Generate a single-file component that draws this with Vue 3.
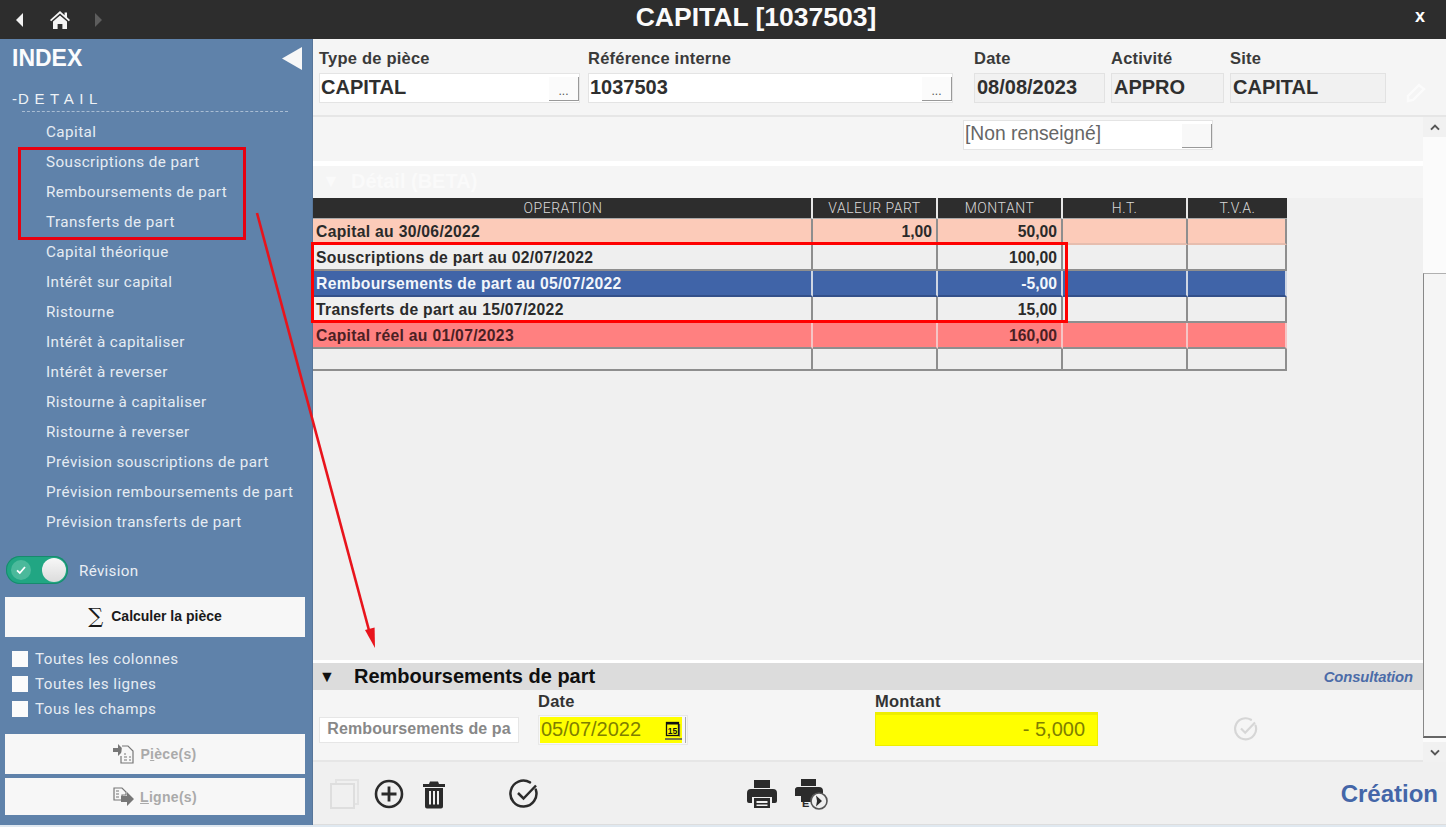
<script setup>
const items = ['Capital','Souscriptions de part','Remboursements de part','Transferts de part','Capital théorique','Intérêt sur capital','Ristourne','Intérêt à capitaliser','Intérêt à reverser','Ristourne à capitaliser','Ristourne à reverser','Prévision souscriptions de part','Prévision remboursements de part','Prévision transferts de part']
const checks = ['Toutes les colonnes','Toutes les lignes','Tous les champs']
const rows = [
  { cls:'peach', op:'Capital au 30/06/2022', val:'1,00', mt:'50,00' },
  { cls:'plain', op:'Souscriptions de part au 02/07/2022', val:'', mt:'100,00' },
  { cls:'blue', op:'Remboursements de part au 05/07/2022', val:'', mt:'-5,00' },
  { cls:'plain', op:'Transferts de part au 15/07/2022', val:'', mt:'15,00' },
  { cls:'red', op:'Capital réel au 01/07/2023', val:'', mt:'160,00' },
  { cls:'plain empty', op:'', val:'', mt:'' },
]
</script>

<template>
  <div class="app">
    <header class="topbar">
      <div class="nav">
        <svg class="nav-arrow" width="10" height="14" viewBox="0 0 10 14"><path d="M8 0v14L1 7z" fill="#f2f2f2"/></svg>
        <svg class="nav-home" width="22" height="20" viewBox="0 0 22 20"><path d="M11 1 1 10l1.2 1.3L11 3.6l8.8 7.7L21 10l-3-2.7V2.5h-2.4v2.7z" fill="#f5f5f5"/><path d="M4 11.5 11 5.4l7 6.1V19h-4.6v-5H8.6v5H4z" fill="#f5f5f5"/></svg>
        <svg class="nav-arrow dim" width="10" height="14" viewBox="0 0 10 14"><path d="M2 0v14l7-7z" fill="#5d5d5d"/></svg>
      </div>
      <h1 class="title">CAPITAL [1037503]</h1>
      <span class="close">x</span>
    </header>

    <div class="body">
      <aside class="sidebar">
        <div class="index-head">
          <span class="index-title">INDEX</span>
          <svg width="20" height="23" viewBox="0 0 20 23"><path d="M20 0v23L0 11.5z" fill="#f7f7f7"/></svg>
        </div>
        <div class="group">-<span class="group-name">DETAIL</span></div>
        <ul class="menu">
          <li v-for="it in items" :key="it">{{ it }}</li>
        </ul>
        <div class="toggle-row">
          <div class="toggle">
            <span class="toggle-check">
              <svg width="14" height="14" viewBox="0 0 14 14"><path d="M3 7.4 5.8 10 11 4" fill="none" stroke="#fff" stroke-width="1.8"/></svg>
            </span>
            <span class="toggle-knob"></span>
          </div>
          <span class="toggle-label">Révision</span>
        </div>
        <button class="side-btn calc">
          <span class="sigma">∑</span>
          <span>Calculer la pièce</span>
        </button>
        <div class="checks">
          <label v-for="c in checks" :key="c" class="check"><span class="box"></span>{{ c }}</label>
        </div>
        <button class="side-btn off first">
          <svg width="22" height="22" viewBox="0 0 22 22"><path d="M0 5h5V1l6 6-6 6V9H0z" fill="#777"/><path d="M9 3h6l5 5v12H8v-7" fill="#f7f7f7" stroke="#777" stroke-width="1.2"/><path d="M11 14h3M16 14h2M11 17h3M16 17h2M11 11h2" stroke="#777" stroke-width="1.2"/></svg>
          <span>P<u>i</u>èce(s)</span>
        </button>
        <button class="side-btn off second">
          <svg width="22" height="20" viewBox="0 0 22 20"><path d="M1 1h8l4 4v3H9v5H1z" fill="#f7f7f7" stroke="#777" stroke-width="1.2"/><path d="M3 4h3M3 7h3M3 10h3" stroke="#777" stroke-width="1.2"/><path d="M8 9h6V5l7 7-7 7v-4H8z" fill="#777"/></svg>
          <span><u>L</u>igne(s)</span>
        </button>
      </aside>

      <main class="main">
        <section class="head">
          <div class="field f-type">
            <label>Type de pièce</label>
            <div class="input"><span class="val">CAPITAL</span><span class="dots">...</span></div>
          </div>
          <div class="field f-ref">
            <label>Référence interne</label>
            <div class="input"><span class="val">1037503</span><span class="dots">...</span></div>
          </div>
          <div class="field f-date">
            <label>Date</label>
            <div class="input ro"><span class="val">08/08/2023</span></div>
          </div>
          <div class="field f-act">
            <label>Activité</label>
            <div class="input ro"><span class="val">APPRO</span></div>
          </div>
          <div class="field f-site">
            <label>Site</label>
            <div class="input ro"><span class="val">CAPITAL</span></div>
          </div>
          <svg class="pencil" width="24" height="24" viewBox="0 0 24 24"><path d="M4 15 15 4l5 4L9 19l-5 1z" fill="none" stroke="#fbfbfb" stroke-width="2.4"/></svg>
        </section>

        <div class="scroller">
          <div class="content">
            <div class="upper">
              <div class="combo"><span class="combo-val">[Non renseigné]</span><span class="combo-btn"></span></div>
              <div class="detail-head"><span class="tri">▼</span><span>Détail (BETA)</span></div>
              <div class="table-wrap">
                <table class="grid">
                  <colgroup><col class="c1"><col class="c2"><col class="c3"><col class="c4"><col class="c5"></colgroup>
                  <thead>
                    <tr><th>OPERATION</th><th>VALEUR PART</th><th>MONTANT</th><th>H.T.</th><th>T.V.A.</th></tr>
                  </thead>
                  <tbody>
                    <tr v-for="(r,i) in rows" :key="i" :class="r.cls">
                      <td class="op">{{ r.op }}</td><td class="num">{{ r.val }}</td><td class="num">{{ r.mt }}</td><td></td><td></td>
                    </tr>
                  </tbody>
                </table>
              </div>
            </div>
            <div class="sub-head">
              <span class="tri-dark">▼</span>
              <span class="sub-title">Remboursements de part</span>
              <span class="consult">Consultation</span>
            </div>
            <div class="sub-form">
              <div class="readonly-box">Remboursements de pa</div>
              <div class="sub-field sf-date">
                <label>Date</label>
                <div class="date-box">
                  <div class="date-fill">
                    <span>05/07/2022</span>
                    <svg class="cal" width="17" height="19" viewBox="0 0 17 19"><rect x="1.5" y="1.5" width="12" height="13" fill="none" stroke="#111" stroke-width="1.3"/><path d="M1 2.500h13" stroke="#111" stroke-width="2"/><path d="M14.500 3v12.500" stroke="#555" stroke-width="1.2"/><path d="M0 18h17" stroke="#555" stroke-width="1.6"/><text x="7.500" y="12.500" text-anchor="middle" class="cal-num">15</text></svg>
                  </div>
                </div>
              </div>
              <div class="sub-field sf-mt">
                <label>Montant</label>
                <div class="mt-box">- 5,000</div>
              </div>
              <svg class="faint-check" width="26" height="26" viewBox="0 0 26 26"><path d="M22.6 9.6A10.5 10.5 0 1 1 18 3.8" fill="none" stroke="#d6d6d6" stroke-width="2.2" stroke-linecap="round"/><path d="M8 12.5l4.2 4.2L22 6.6" fill="none" stroke="#d6d6d6" stroke-width="2.2"/></svg>
            </div>
          </div>
          <div class="scrollbar">
            <div class="sb-btn"><svg width="10" height="7" viewBox="0 0 10 7"><path d="M1 5.6 5 1.6l4 4" fill="none" stroke="#555" stroke-width="2"/></svg></div>
            <div class="sb-track"><div class="sb-thumb"></div></div>
            <div class="sb-btn"><svg width="10" height="7" viewBox="0 0 10 7"><path d="M1 1.4l4 4 4-4" fill="none" stroke="#555" stroke-width="2"/></svg></div>
          </div>
        </div>

        <footer class="toolbar">
          <svg class="t-copy" width="32" height="32" viewBox="0 0 32 32"><path d="M7 5V2h22v24h-4" fill="none" stroke="#e3e3e3" stroke-width="2"/><rect x="2" y="6" width="23" height="24" fill="none" stroke="#dedede" stroke-width="2"/></svg>
          <svg class="t-add" width="30" height="30" viewBox="0 0 30 30"><circle cx="15" cy="15" r="13" fill="none" stroke="#2b2b2b" stroke-width="2.6"/><path d="M15 7.5v15M7.500 15h15" stroke="#2b2b2b" stroke-width="2.8"/></svg>
          <svg class="t-del" width="24" height="30" viewBox="0 0 24 30"><path d="M8 2.500h8l1 2.500h6v3H1V5h6z" fill="#2b2b2b"/><path fill-rule="evenodd" d="M3 9h18v18.500a2 2 0 0 1-2 2H5a2 2 0 0 1-2-2zM7 12v13.500h2V12zM11 12v13.500h2V12zM15 12v13.500h2V12z" fill="#2b2b2b"/></svg>
          <svg class="t-ok" width="32" height="32" viewBox="0 0 32 32"><path d="M27.800 11.600A13 13 0 1 1 22 4.400" fill="none" stroke="#2b2b2b" stroke-width="2.500" stroke-linecap="round"/><path d="M10 15l5.500 5.500L28 7.500" fill="none" stroke="#2b2b2b" stroke-width="2.500"/></svg>
          <svg class="t-print" width="32" height="30" viewBox="0 0 32 30"><path d="M8 1h16v8H8z" fill="#2b2b2b"/><path d="M5 10h22a4 4 0 0 1 4 4v8a2 2 0 0 1-2 2h-3v-6H6v6H3a2 2 0 0 1-2-2v-8a4 4 0 0 1 4-4z" fill="#2b2b2b"/><path fill-rule="evenodd" d="M8 19h16v10H8zM10.500 22v2h11v-2zM10.500 25.500v1.500h11v-1.500z" fill="#2b2b2b"/></svg>
          <svg class="t-print2" width="34" height="32" viewBox="0 0 34 32"><path d="M6 1h15v7H6z" fill="#2b2b2b"/><path d="M3 9h21a4 4 0 0 1 4 4v5a10 10 0 0 0-11 6H6v-6H0v-5a3 3 0 0 1 3-4z" fill="#2b2b2b"/><text x="7" y="29" class="e-mark">E</text><circle cx="24" cy="23" r="8" fill="#efefef" stroke="#555" stroke-width="1.6"/><path d="M21 17.500l6 5.500-6 5.500 1-5.500z" fill="#2b2b2b"/></svg>
          <span class="creation">Création</span>
        </footer>
      </main>
    </div>

    <div class="mark mark-side"></div>
    <div class="mark mark-table"></div>
    <svg class="arrow" width="140" height="450" viewBox="0 0 140 450">
      <path d="M7 3 120 424" stroke="#e8141c" stroke-width="2.6" fill="none"/>
      <path d="M125 438 115 420 124.600 417.400z" fill="#e8141c"/>
    </svg>
  </div>
</template>

<style>
html, body { margin: 0; padding: 0; background: #e4ebf2; }
</style>

<style scoped>
.app { position: relative; width: 1446px; height: 827px; overflow: hidden; font-family: "Liberation Sans", Arial, sans-serif; background: #dfe8f0; }
.topbar { height: 39px; background: #2d2d2d; position: relative; display: flex; align-items: center; justify-content: center; color: #fff; }
.nav { position: absolute; left: 15px; top: 10px; display: flex; align-items: center; }
.nav-home { margin: 0 22px 0 24px; }
.title { margin: 0 0 5px 66px; font-size: 26.5px; font-weight: 700; color: #fbfbfb; }
.close { position: absolute; right: 21px; top: 6px; font-size: 18px; font-weight: 700; }

.body { display: flex; height: 786px; }

.sidebar { width: 313px; flex: none; box-sizing: border-box; background: #5f82aa; padding: 0 8px 0 5px; color: #e9eef4; border-right: 1px solid #57769a; }
.index-head { display: flex; justify-content: space-between; align-items: center; padding: 7px 2px 0 7px; height: 24px; }
.index-title { font-size: 23px; font-weight: 700; color: #fbfcfd; }
.group { margin: 19px 0 0 7px; font-size: 15px; line-height: 20px; color: #eef2f6; padding-bottom: 3px; position: relative; }
.group-name { letter-spacing: 5.6px; margin-left: 1px; }
.group::after { content: ""; position: absolute; left: 10px; width: 266px; bottom: 0; border-bottom: 1px dashed #a9bdd3; }
.menu { list-style: none; margin: 5px 0 0; padding: 0 0 0 41px; }
.menu li { height: 30px; line-height: 30px; font-size: 15.200px; letter-spacing: .45px; font-family: Roboto, "Liberation Sans", sans-serif; white-space: nowrap; width: 250px; color: #e6ecf3; }
.toggle-row { display: flex; align-items: center; margin-top: 19px; height: 28px; }
.toggle { width: 62px; height: 28px; margin-left: 1px; border-radius: 14px; background: #21a683; box-shadow: inset 0 0 0 1px #178a6d; display: flex; align-items: center; justify-content: space-between; padding: 0 2px 0 5px; box-sizing: border-box; }
.toggle-check { width: 20px; height: 20px; border-radius: 50%; background: #4bb99b; display: flex; align-items: center; justify-content: center; }
.toggle-knob { width: 24px; height: 24px; border-radius: 50%; background: linear-gradient(#f7f7f7, #dcdcdc); }
.toggle-label { margin-left: 11px; font-family: Roboto, "Liberation Sans", sans-serif; font-size: 15.200px; letter-spacing: .3px; padding-top: 2px; }
.side-btn { display: flex; width: 300px; align-items: center; justify-content: center; border: 0; padding: 0; background: #f7f7f7; font-family: "Liberation Sans", Arial, sans-serif; font-weight: 700; }
.calc { height: 40px; margin-top: 13px; font-size: 14px; color: #1a1a1a; gap: 8px; padding-bottom: 2px; }
.sigma { font-size: 21px; font-weight: 400; line-height: 22px; font-family: "DejaVu Serif", serif; }
.checks { margin-top: 9px; }
.check { display: flex; align-items: center; height: 25px; margin-left: 7px; font-family: Roboto, "Liberation Sans", sans-serif; font-size: 15.200px; letter-spacing: .45px; color: #e6ecf3; }
.box { width: 16px; height: 16px; background: #fbfbfb; margin-right: 7px; }
.off { color: #aaa; font-size: 14px; letter-spacing: .3px; gap: 5px; }
.first { height: 40px; margin-top: 13px; }
.second { height: 37px; margin-top: 4px; }

.main { width: 1133px; display: flex; flex-direction: column; background: #f5f5f5; height: 786px; }
.head { height: 78px; box-sizing: border-box; display: flex; padding: 10px 0 0 6px; position: relative; border-bottom: 2px solid #e6e6e6; flex: none; }
.field label { display: block; font-size: 16.500px; font-weight: 700; color: #3a3a3a; line-height: 18px; margin-bottom: 6px; letter-spacing: .22px; }
.input { height: 30px; box-sizing: border-box; background: #fff; border: 1px solid #e4e4e4; display: flex; align-items: center; justify-content: space-between; font-size: 20px; font-weight: 700; color: #2f2f2f; padding: 0 0 0 1px; }
.val { margin-top: -2px; }
.input.ro { background: #f1f1f1; border-color: #e2e2e2; padding-left: 2px; }
.dots { width: 30px; height: 24px; box-sizing: border-box; margin: 2px 0 0; background: #fbfbfb; border-right: 1px solid #999; border-bottom: 1px solid #999; font-size: 12px; font-weight: 400; color: #555; text-align: center; line-height: 28px; }
.f-type { width: 261px; }
.f-ref { width: 365px; margin-left: 8px; }
.f-date { width: 131px; margin-left: 21px; }
.f-act { width: 113px; margin-left: 6px; }
.f-site { width: 156px; margin-left: 6px; }
.pencil { position: absolute; left: 1091px; top: 42px; }

.scroller { flex: 1; display: flex; min-height: 0; }
.content { flex: 1; display: flex; flex-direction: column; min-width: 0; }
.upper { height: 543px; flex: none; }
.combo { margin: 3px 0 0 650px; width: 250px; height: 30px; box-sizing: border-box; background: #fff; border: 1px solid #e4e4e4; display: flex; align-items: center; justify-content: space-between; font-size: 19.300px; color: #666; padding-left: 1px; }
.combo-val { margin-top: -3px; }
.combo-btn { width: 30px; height: 24px; margin-top: 2px; box-sizing: border-box; background: #f8f8f8; border-right: 1px solid #999; border-bottom: 1px solid #999; }
.detail-head { margin-top: 11px; border-top: 5px solid #fff; height: 37px; box-sizing: border-box; padding: 4px 0 0 9px; color: #fafafa; font-size: 20px; font-weight: 700; line-height: 22px; display: flex; }
.tri { font-size: 18px; width: 29px; }
.table-wrap { background: #f0f0f0; height: 462px; }
.grid { border-collapse: separate; border-spacing: 0; table-layout: fixed; width: 974px; }
.c1 { width: 500px; } .c2, .c3, .c4 { width: 125px; } .c5 { width: 99px; }
.grid th { height: 20px; background: #2d2d2d; color: #d9d9d9; font-size: 14px; font-weight: 300; font-family: Roboto, "Liberation Sans", sans-serif; letter-spacing: .5px; padding: 0; border-right: 2px solid #e8e8e8; border-bottom: 1px solid #aaa; box-sizing: content-box; line-height: 17px; }
.grid th:first-child { padding-left: 2px; }
.grid th:last-child { border-right: 0; }
.grid td { height: 23px; padding: 1px 4px 0 3px; font-size: 15.700px; font-weight: 700; color: #2a2a2a; border-right: 2px solid #8e8e8e; border-bottom: 2px solid #8e8e8e; box-sizing: content-box; overflow: hidden; white-space: nowrap; }
.grid .op { letter-spacing: .3px; }
.grid .num { text-align: right; }
.peach td { background: #fccbb9; border-bottom-color: #e6bdae; }
.plain td { background: #efefef; }
.blue td { background: #4064a8; color: #f2f6fb; border-bottom-color: #33508a; border-right-color: #cfd6e3; }
.red td { background: #ff8080; color: #4b1f24; border-right-color: #f5c5c5; }
.empty td { height: 19px; }

.sub-head { height: 27px; flex: none; box-sizing: content-box; background: #dcdcdc; border-top: 3px solid #fff; display: flex; align-items: center; padding: 0 10px 0 6px; }
.tri-dark { font-size: 16px; color: #111; width: 35px; }
.sub-title { font-size: 20px; font-weight: 700; color: #0f0f0f; flex: 1; }
.consult { font-size: 14.800px; font-style: italic; font-weight: 700; color: #4c6ca8; letter-spacing: -.1px; }
.sub-form { flex: 1; display: flex; position: relative; padding-left: 6px; border-bottom: 2px solid #e6e6e6; }
.readonly-box { width: 200px; height: 26px; box-sizing: border-box; margin-top: 27px; background: #fff; border: 1px solid #e6e6e6; color: #888; font-size: 16px; letter-spacing: .1px; font-weight: 700; line-height: 22px; text-align: center; white-space: nowrap; overflow: hidden; }
.sub-field label { display: block; font-size: 16.500px; letter-spacing: .22px; font-weight: 700; color: #333; line-height: 18px; margin-top: 2px; }
.sf-date { margin-left: 19px; width: 150px; }
.date-box { width: 150px; height: 30px; box-sizing: border-box; margin-top: 5px; border: 1px solid #e8e8e8; background: #f7f7f7; padding: 1px 0 0 1px; }
.date-fill { width: 142px; height: 26px; background: #ffff00; color: #7f7f00; font-size: 20px; padding-left: 1px; box-sizing: border-box; line-height: 24px; position: relative; box-shadow: 3px 0 0 #f7f7f7, 4px 0 0 #aaa; }
.cal { position: absolute; left: 125px; top: 4px; }
.cal-num { font: 700 8.500px "Liberation Sans", sans-serif; fill: #111; }
.sf-mt { margin-left: 187px; width: 223px; }
.mt-box { width: 223px; height: 34px; box-sizing: border-box; margin-top: 2px; background: #ffff00; border: 1px solid #eeee00; border-top-width: 3px; color: #7f7f00; font-size: 20px; text-align: right; padding-right: 12px; line-height: 29px; }
.faint-check { margin: 26px 0 0 135px; }

.scrollbar { width: 23px; flex: none; display: flex; flex-direction: column; background: #fbfbfb; }
.sb-btn { height: 20px; background: #f1f1f1; display: flex; align-items: center; justify-content: center; }
.sb-track { flex: 1; padding-top: 136px; padding-bottom: 4px; display: flex; background: #fbfbfb; }
.sb-thumb { flex: 1; background: #f5f5f5; border: 1px solid #b0b0b0; border-bottom: 2px solid #666; border-left-color: #888; border-right: 0; }

.toolbar { flex: none; height: 63px; box-sizing: border-box; background: #f0f0f0; display: flex; align-items: center; position: relative; border-bottom: 1px solid #ddd; padding-top: 2px; }
.t-copy { margin-left: 16px; }
.t-add { margin-left: 13px; }
.t-del { margin-left: 18px; }
.t-ok { margin-left: 62px; }
.t-print { margin-left: 206px; }
.t-print2 { margin-left: 17px; }
.e-mark { font: 700 11px "Liberation Sans", sans-serif; fill: #2b2b2b; }
.creation { margin-left: auto; margin-right: 8px; font-size: 24px; font-weight: 700; color: #4466a8; }

.mark { position: absolute; border: 3px solid #e8000f; box-sizing: border-box; pointer-events: none; }
.mark-side { left: 18px; top: 147px; width: 228px; height: 93px; }
.mark-table { left: 311px; top: 242px; width: 757px; height: 81px; border-color: #f00; }
.arrow { position: absolute; left: 250px; top: 210px; pointer-events: none; }
</style>
